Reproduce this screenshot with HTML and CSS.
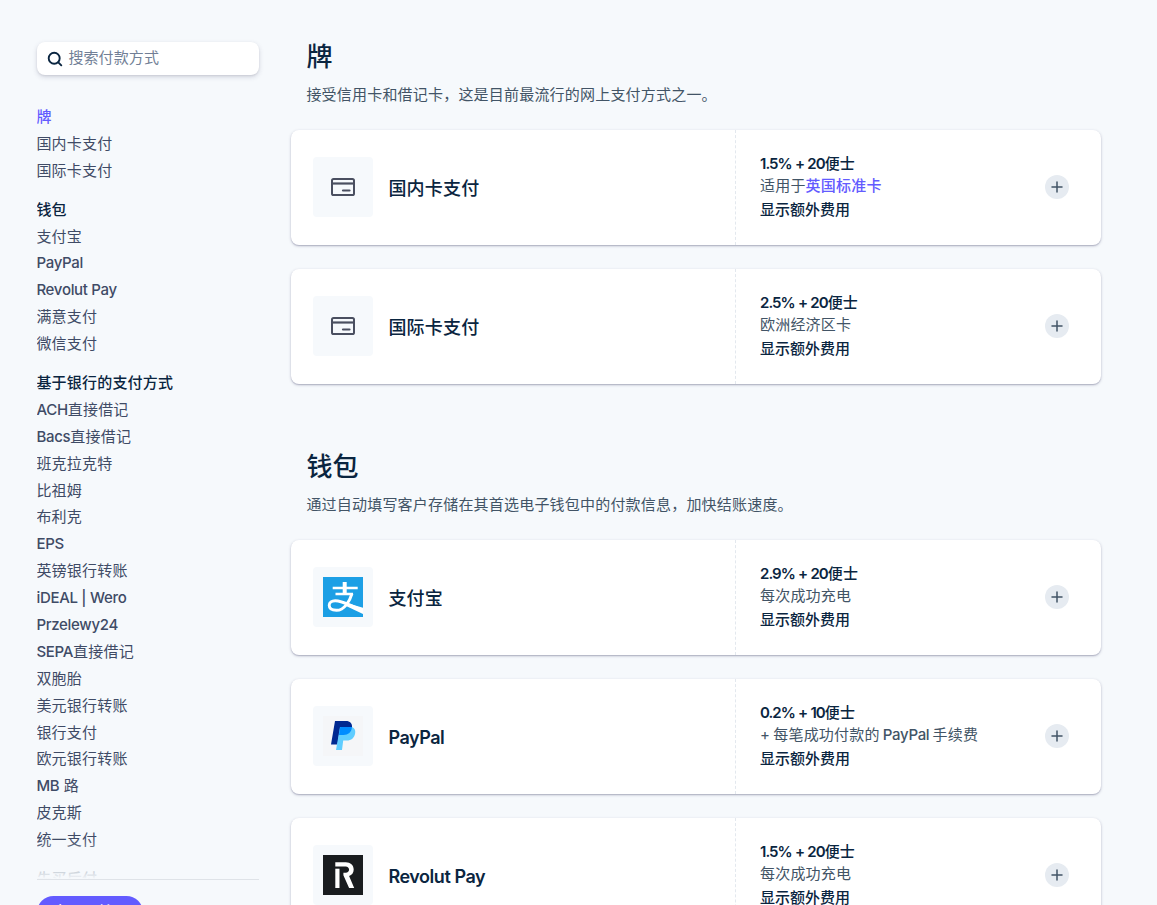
FILE: index.html
```html
<!DOCTYPE html>
<html lang="zh-CN">
<head>
    <meta charset="UTF-8">
    <meta name="viewport" content="width=device-width, initial-scale=1.0">
    <link rel="stylesheet" href="styles.css">
    <title>付款方式定价</title>
</head>
<body>
    <!-- shared icons -->
    <svg class="sprite" width="0" height="0">
        <symbol id="icon-card" viewBox="0 0 24 18">
            <rect x="1" y="1" width="22" height="16" rx="1.6" fill="none" stroke="#4a4f60" stroke-width="2"/>
            <path d="M1 5.500h22" stroke="#4a4f60" stroke-width="2.200"/>
            <path d="M12 12.500h6.500" stroke="#4a4f60" stroke-width="2.200" stroke-linecap="round"/>
        </symbol>
        <symbol id="icon-plus" viewBox="0 0 12 12">
            <path d="M6 1v10M1 6h10" stroke="#425466" stroke-width="1.500" stroke-linecap="round"/>
        </symbol>
    </svg>

    <div class="page">
        <aside class="sidebar">
            <label class="search">
                <svg width="16" height="16" viewBox="0 0 16 16">
                    <circle cx="7.2" cy="7.2" r="5.5" fill="none" stroke="#0a2540" stroke-width="1.9"/>
                    <path d="M11.3 11.3l3 3" stroke="#0a2540" stroke-width="1.9" stroke-linecap="round"/>
                </svg>
                <input type="text" placeholder="搜索付款方式">
            </label>
            <nav class="nav">
                <ul>
                    <li class="active">牌</li>
                    <li>国内卡支付</li>
                    <li>国际卡支付</li>
                </ul>
                <ul>
                    <li class="title">钱包</li>
                    <li>支付宝</li>
                    <li><span class="en">PayPal</span></li>
                    <li><span class="en">Revolut Pay</span></li>
                    <li>满意支付</li>
                    <li>微信支付</li>
                </ul>
                <ul>
                    <li class="title">基于银行的支付方式</li>
                    <li><span class="en">ACH</span>直接借记</li>
                    <li><span class="en">Bacs</span>直接借记</li>
                    <li>班克拉克特</li>
                    <li>比祖姆</li>
                    <li>布利克</li>
                    <li><span class="en">EPS</span></li>
                    <li>英镑银行转账</li>
                    <li><span class="en">iDEAL | Wero</span></li>
                    <li><span class="en">Przelewy24</span></li>
                    <li><span class="en">SEPA</span>直接借记</li>
                    <li>双胞胎</li>
                    <li>美元银行转账</li>
                    <li>银行支付</li>
                    <li>欧元银行转账</li>
                    <li><span class="en">MB</span> 路</li>
                    <li>皮克斯</li>
                    <li>统一支付</li>
                </ul>
                <ul>
                    <li class="title">先买后付</li>
                </ul>
            </nav>
            <a class="button">立即开始</a>
        </aside>

        <main class="content">
            <section>
                <h2>牌</h2>
                <p class="intro">接受信用卡和借记卡，这是目前最流行的网上支付方式之一。</p>
                <div class="card">
                    <div class="method">
                        <div class="logo"><svg width="24" height="18"><use href="#icon-card"/></svg></div>
                        <h3>国内卡支付</h3>
                    </div>
                    <div class="pricing">
                        <div>
                            <p class="price"><span class="num">1.5% + 20</span>便士</p>
                            <p class="note">适用于<a>英国标准卡</a></p>
                            <p class="more">显示额外费用</p>
                        </div>
                        <span class="plus"><svg width="12" height="12"><use href="#icon-plus"/></svg></span>
                    </div>
                </div>
                <div class="card">
                    <div class="method">
                        <div class="logo"><svg width="24" height="18"><use href="#icon-card"/></svg></div>
                        <h3>国际卡支付</h3>
                    </div>
                    <div class="pricing">
                        <div>
                            <p class="price"><span class="num">2.5% + 20</span>便士</p>
                            <p class="note">欧洲经济区卡</p>
                            <p class="more">显示额外费用</p>
                        </div>
                        <span class="plus"><svg width="12" height="12"><use href="#icon-plus"/></svg></span>
                    </div>
                </div>
            </section>

            <section>
                <h2>钱包</h2>
                <p class="intro">通过自动填写客户存储在其首选电子钱包中的付款信息，加快结账速度。</p>
                <div class="card">
                    <div class="method">
                        <div class="logo">
                            <svg width="40" height="40" viewBox="0 0 40 40">
                                <path fill="#1c9fe5" d="M0 0h40v40H0z"/>
                                <path d="M9.700 11h25M12.500 17h17.500" fill="none" stroke="#fff" stroke-width="2.300"/>
                                <path d="M21.700 5v12" fill="none" stroke="#fff" stroke-width="4"/>
                                <path d="M29 16.500c-2 7-7.500 16.800-15.500 16.800-4.800 0-7.300-2.100-7.300-5 0-2.700 2.600-4.500 6-4.500 7 0 15 4.700 24 8" fill="none" stroke="#fff" stroke-width="2.900"/>
                                <path fill="#fff" d="M22 25.500l18 5.200v6.300L22 28.500z"/>
                            </svg>
                        </div>
                        <h3>支付宝</h3>
                    </div>
                    <div class="pricing">
                        <div>
                            <p class="price"><span class="num">2.9% + 20</span>便士</p>
                            <p class="note">每次成功充电</p>
                            <p class="more">显示额外费用</p>
                        </div>
                        <span class="plus"><svg width="12" height="12"><use href="#icon-plus"/></svg></span>
                    </div>
                </div>
                <div class="card">
                    <div class="method">
                        <div class="logo">
                            <svg width="40" height="40" viewBox="0 0 40 40">
                                <path fill="#f5f6f8" d="M0 0h40v40H0z"/>
                                <path fill="#002991" d="M12 5h11c4 0 6.500 2.500 6 6.500C28.400 16.500 25 19 20.500 19h-4.500l-1.500 9.500H8z"/>
                                <path fill="#60cdff" d="M17 11h12c2.500 1 3.600 3 3.200 6-.7 5-4 7.500-8.500 7.500h-3.500L19 34h-6z"/>
                                <path fill="#008cff" d="M17.200 11H29c-.4 5.200-3.900 8-8.500 8H16z"/>
                            </svg>
                        </div>
                        <h3 class="en">PayPal</h3>
                    </div>
                    <div class="pricing">
                        <div>
                            <p class="price"><span class="num">0.2% + 10</span>便士</p>
                            <p class="note">+ 每笔成功付款的 <span class="en">PayPal</span> 手续费</p>
                            <p class="more">显示额外费用</p>
                        </div>
                        <span class="plus"><svg width="12" height="12"><use href="#icon-plus"/></svg></span>
                    </div>
                </div>
                <div class="card">
                    <div class="method">
                        <div class="logo">
                            <svg width="40" height="40" viewBox="0 0 40 40">
                                <path fill="#191c1f" d="M0 0h40v40H0z"/>
                                <path fill="#fff" d="M12.300 13.700h4.200V33h-4.200z"/>
                                <path fill="#fff" d="M12.300 7.300h10.500c4.600 0 7.900 3.100 7.900 7.200 0 3.300-1.900 5.600-4.600 6.500L31.200 33h-5.100l-5.700-12.800v-2.400h2.300c2 0 3.400-1.300 3.400-3.200s-1.400-3.200-3.400-3.200H12.300z"/>
                            </svg>
                        </div>
                        <h3 class="en">Revolut Pay</h3>
                    </div>
                    <div class="pricing">
                        <div>
                            <p class="price"><span class="num">1.5% + 20</span>便士</p>
                            <p class="note">每次成功充电</p>
                            <p class="more">显示额外费用</p>
                        </div>
                        <span class="plus"><svg width="12" height="12"><use href="#icon-plus"/></svg></span>
                    </div>
                </div>
            </section>
        </main>
    </div>
</body>
</html>
```

FILE: styles.css
```css
*{
    box-sizing: border-box;
}
body{
    margin: 0;
    height: 100vh;
    overflow: hidden;
    background: #f6f9fc;
    color: #425466;
    font-family: Inter, "Noto Sans CJK SC", sans-serif;
    font-size: 15px;
    letter-spacing: 0.2px;
}
h2, h3, p, ul{
    margin: 0;
    padding: 0;
}
.sprite{
    position: absolute;
}
/* latin text is set tighter than the chinese */
.en{
    font-weight: 500;
    letter-spacing: -0.3px;
}
.num{
    font-weight: 600;
    letter-spacing: -0.95px;
    word-spacing: 0.4px;
}
.page{
    display: flex;
    align-items: flex-start;
    gap: 32px;
    padding: 42px 56px 0 37px;
}

/* sidebar */
.sidebar{
    width: 222px;
    flex: none;
}
.search{
    display: flex;
    align-items: center;
    gap: 5.4px;
    height: 33px;
    padding: 0 10px;
    border-radius: 8px;
    background: #fff;
    box-shadow: 0 2px 5px rgba(50, 50, 93, 0.18), 0 1px 2px rgba(0, 0, 0, 0.08);
}
.search input{
    width: 160px;
    padding: 0 0 2px;
    border: 0;
    outline: 0;
    background: none;
    font: inherit;
    letter-spacing: 0.1px;
}
.search input::placeholder{
    color: #727f96;
}
.nav{
    height: 776px;
    margin-top: 29px;
    overflow: hidden;
    border-bottom: 1px solid #dfe3e8;
    color: #3f4b66;
    position: relative;
}
/* fade at the end of the list */
.nav::after{
    content: "";
    position: absolute;
    left: 0;
    right: 0;
    bottom: 0;
    height: 40px;
    background: linear-gradient(rgba(246, 249, 252, 0), #f6f9fc);
}
.nav ul{
    list-style: none;
    margin: 0 0 12px -0.6px;
}
.nav li{
    height: 26.9px;
    line-height: 26.9px;
}
.nav .active{
    color: #635bff;
    font-weight: 500;
}
.nav .title{
    color: #0a2540;
    font-weight: 500;
}
.button{
    display: block;
    width: 106px;
    height: 33px;
    margin-top: 16px;
    border-radius: 17px;
    background: #635bff;
    color: #fff;
    font-weight: 500;
    line-height: 31px;
    padding-left: 16px;
}

/* content */
.content{
    flex: 1;
}
.content section{
    margin-bottom: 68px;
}
h2{
    padding-left: 15.4px;
    color: #0a2540;
    font-size: 26px;
    font-weight: 500;
    line-height: 30px;
}
.intro{
    margin: 10px 0 23px;
    padding-left: 15.4px;
    line-height: 25px;
}
.card{
    display: flex;
    height: 115px;
    margin-bottom: 24px;
    border-radius: 8px;
    background: #fff;
    box-shadow: 0 1px 3px rgba(50, 50, 93, 0.28), 0 1px 1px rgba(50, 50, 93, 0.18);
}
.method{
    display: flex;
    align-items: center;
    gap: 15.4px;
    width: 444px;
    padding: 0 0 1px 22px;
}
.logo{
    display: flex;
    align-items: center;
    justify-content: center;
    width: 60px;
    height: 60px;
    border-radius: 4px;
    background: #f6f9fc;
}
h3{
    color: #0a2540;
    font-size: 18px;
    font-weight: 500;
}
h3.en{
    padding-top: 2px;
    font-weight: 600;
    letter-spacing: -0.45px;
}
.pricing{
    flex: 1;
    display: flex;
    align-items: center;
    justify-content: space-between;
    padding: 0 32px 1px 24px;
    border-left: 1px dashed #e3e8ee;
}
.pricing p{
    line-height: 22px;
}
.pricing .price{
    padding-top: 2px;
}
.price, .more{
    color: #0a2540;
    font-weight: 500;
}
.note{
    word-spacing: -1.3px;
}
.pricing .more{
    line-height: 26px;
    letter-spacing: 0;
}
.pricing a{
    color: #635bff;
    font-weight: 500;
}
.plus{
    display: flex;
    align-items: center;
    justify-content: center;
    width: 24px;
    height: 24px;
    border-radius: 50%;
    background: #e6ebf1;
}
```
